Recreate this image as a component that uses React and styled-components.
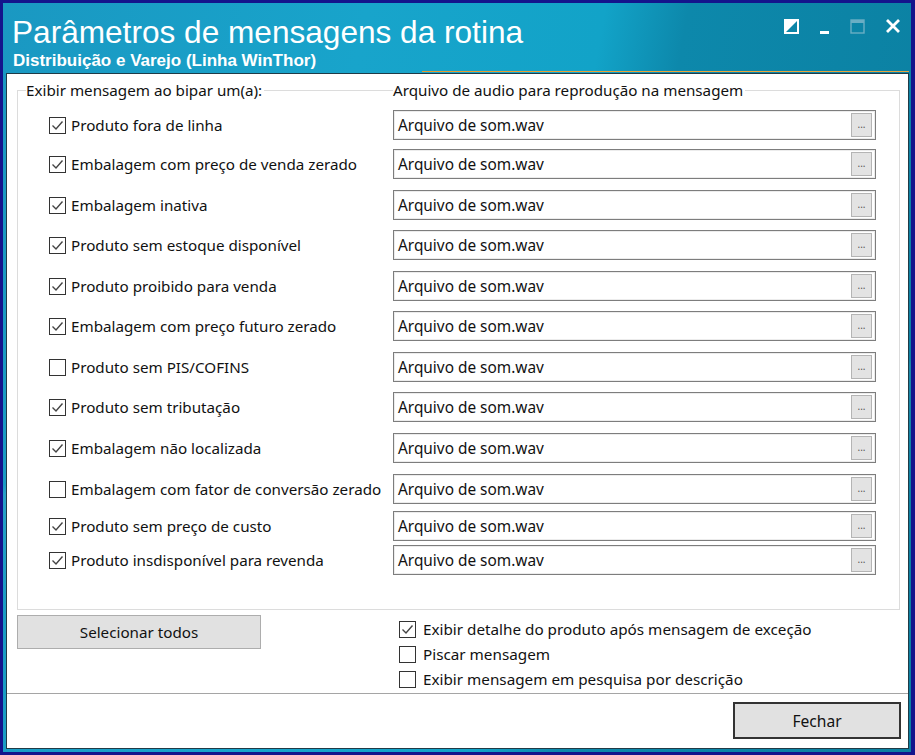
import styled, { createGlobalStyle } from 'styled-components';

const GlobalStyle = createGlobalStyle`
  html, body {
    margin: 0;
    padding: 0;
  }
  body {
    width: 915px;
    height: 755px;
    overflow: hidden;
    font-family: "Noto Sans", "Open Sans", sans-serif;
    color: #111;
  }
`;

const rows = [
  { label: 'Produto fora de linha', checked: true, gap: 10 },
  { label: 'Embalagem com preço de venda zerado', checked: true, gap: 9 },
  { label: 'Embalagem inativa', checked: true, gap: 11 },
  { label: 'Produto sem estoque disponível', checked: true, gap: 10 },
  { label: 'Produto proibido para venda', checked: true, gap: 11 },
  { label: 'Embalagem com preço futuro zerado', checked: true, gap: 10 },
  { label: 'Produto sem PIS/COFINS', checked: false, gap: 11 },
  { label: 'Produto sem tributação', checked: true, gap: 10 },
  { label: 'Embalagem não localizada', checked: true, gap: 11 },
  { label: 'Embalagem com fator de conversão zerado', checked: false, gap: 11 },
  { label: 'Produto sem preço de custo', checked: true, gap: 7 },
  { label: 'Produto insdisponível para revenda', checked: true, gap: 4 },
];

const options = [
  { label: 'Exibir detalhe do produto após mensagem de exceção', checked: true },
  { label: 'Piscar mensagem', checked: false },
  { label: 'Exibir mensagem em pesquisa por descrição', checked: false },
];

const CheckBox = ({ checked }) => (
  <Box>
    {checked && (
      <svg width="15" height="15" viewBox="0 0 15 15">
        <path d="M2.5 7.5 L6 11 L12.5 3.5" fill="none" stroke="#444" strokeWidth="1.4" />
      </svg>
    )}
  </Box>
);

const App = () => {
  return (
    <Frame>
      <GlobalStyle />
      <Window>
        <Header>
          <TitleRow>
            <Title>Parâmetros de mensagens da rotina</Title>
            <Controls>
              <svg width="15" height="15" viewBox="0 0 15 15">
                <rect x="1" y="1" width="13" height="13" fill="none" stroke="#fff" strokeWidth="2" />
                <polygon points="1,1 14,1 1,14" fill="#fff" />
              </svg>
              <svg width="11" height="15" viewBox="0 0 11 15">
                <rect x="1" y="12" width="9" height="3" fill="#fff" />
              </svg>
              <svg width="15" height="15" viewBox="0 0 15 15">
                <rect x="1" y="1" width="13" height="13" fill="none" stroke="#6aaec4" strokeWidth="1.4" />
                <rect x="1" y="1" width="13" height="3" fill="#6aaec4" />
              </svg>
              <svg width="16" height="16" viewBox="0 0 16 16">
                <path d="M2 2 L14 14 M14 2 L2 14" stroke="#fff" strokeWidth="2.8" />
              </svg>
            </Controls>
          </TitleRow>
          <Subtitle>Distribuição e Varejo (Linha WinThor)</Subtitle>
          <AccentLine />
        </Header>

        <Panel>
          <GroupBox>
            <GroupHeader>
              <Legend>Exibir mensagem ao bipar um(a):</Legend>
              <Legend>Arquivo de audio para reprodução na mensagem</Legend>
            </GroupHeader>
            {rows.map((row) => (
              <Row key={row.label} $gap={row.gap}>
                <CheckLabel>
                  <CheckBox checked={row.checked} />
                  <span>{row.label}</span>
                </CheckLabel>
                <Field>
                  <FieldText>Arquivo de som.wav</FieldText>
                  <BrowseButton>...</BrowseButton>
                </Field>
              </Row>
            ))}
          </GroupBox>

          <BottomArea>
            <SelectButton>Selecionar todos</SelectButton>
            <Options>
              {options.map((opt) => (
                <OptionRow key={opt.label}>
                  <CheckBox checked={opt.checked} />
                  <span>{opt.label}</span>
                </OptionRow>
              ))}
            </Options>
          </BottomArea>

          <Footer>
            <CloseButton>Fechar</CloseButton>
          </Footer>
        </Panel>
      </Window>
    </Frame>
  );
};

const Frame = styled.div`
  width: 915px;
  height: 755px;
  box-sizing: border-box;
  background: #14148c;
  padding: 3px 4px 3px 3px;
  display: flex;
`;

const Window = styled.div`
  flex: 1;
  display: flex;
  flex-direction: column;
  padding: 0 2px 3px 3px;
  background:
    linear-gradient(172deg, rgba(255, 255, 255, 0) 55%, rgba(255, 255, 255, 0.06) 56%, rgba(255, 255, 255, 0) 70%),
    linear-gradient(100deg, #1a98c2 0%, #18a4cb 35%, #12a3c8 58%, #0d88ab 66%, #0b7fa0 100%);
`;

const Header = styled.div`
  height: 70px;
  display: flex;
  flex-direction: column;
`;

const TitleRow = styled.div`
  display: flex;
  align-items: flex-start;
  justify-content: space-between;
  height: 47px;
  padding: 0 8px 0 6px;
`;

const Title = styled.div`
  font-family: "Liberation Sans", Arial, sans-serif;
  font-size: 31.6px;
  line-height: 36px;
  margin-top: 11px;
  color: #fff;
  white-space: nowrap;
`;

const Controls = styled.div`
  display: flex;
  align-items: center;
  gap: 20px;
  margin-top: 15px;
  svg {
    display: block;
  }
`;

const Subtitle = styled.div`
  font-family: "Liberation Sans", Arial, sans-serif;
  font-weight: bold;
  font-size: 17px;
  line-height: 20px;
  color: #fff;
  padding: 1px 0 0 7px;
`;

const AccentLine = styled.div`
  margin-top: auto;
  margin-left: 416px;
  margin-bottom: 1px;
  height: 3px;
  background: linear-gradient(90deg, #e99a2c, #f0a83a 60%, #e7a53f);
`;

const Panel = styled.div`
  flex: 1;
  background: #fff;
  border: 1px solid #1f3b47;
  display: flex;
  flex-direction: column;
`;

const GroupBox = styled.div`
  margin: 16px 8px 0 10px;
  border: 1px solid #dcdcdc;
  padding: 0 23px 34px 31px;
`;

const GroupHeader = styled.div`
  display: grid;
  grid-template-columns: 367px 1fr;
  margin: -10px 0 0 -23px;
  height: 19px;
`;

const Legend = styled.span`
  justify-self: start;
  background: #fff;
  padding-right: 2px;
  font-size: 15.2px;
  line-height: 19px;
  color: #111;
`;

const Row = styled.div`
  display: grid;
  grid-template-columns: 344px 1fr;
  align-items: center;
  height: 30px;
  margin-top: ${(p) => p.$gap}px;
`;

const CheckLabel = styled.label`
  display: flex;
  align-items: center;
  gap: 5px;
  font-size: 15.2px;
  color: #111;
  white-space: nowrap;
`;

const Box = styled.span`
  width: 17px;
  height: 17px;
  box-sizing: border-box;
  border: 1px solid #333;
  background: #fff;
  display: flex;
  align-items: center;
  justify-content: center;
  flex: none;
`;

const Field = styled.div`
  height: 30px;
  box-sizing: border-box;
  border: 1px solid #7d7d7d;
  box-shadow: inset 0 0 0 1px #ececec;
  display: flex;
  align-items: center;
  padding: 0 3px 0 4px;
`;

const FieldText = styled.span`
  flex: 1;
  font-size: 15.4px;
  color: #111;
`;

const BrowseButton = styled.span`
  width: 21px;
  height: 24px;
  box-sizing: border-box;
  border: 1px solid #b4b4b4;
  background: #e3e3e3;
  font-size: 10px;
  line-height: 10px;
  color: #555;
  display: flex;
  align-items: center;
  justify-content: center;
  padding-bottom: 2px;
`;

const BottomArea = styled.div`
  flex: 1;
  display: flex;
  align-items: flex-start;
  padding: 5px 0 0 10px;
  border-bottom: 1px solid #a5a5a5;
`;

const SelectButton = styled.button`
  width: 244px;
  height: 34px;
  box-sizing: border-box;
  border: 1px solid #adadad;
  background: #e1e1e1;
  font-family: "Noto Sans", "Open Sans", sans-serif;
  font-size: 15.2px;
  color: #111;
  padding: 0;
`;

const Options = styled.div`
  display: flex;
  flex-direction: column;
  margin-left: 138px;
  padding-top: 1.5px;
`;

const OptionRow = styled.label`
  display: flex;
  align-items: center;
  gap: 7px;
  height: 25px;
  font-size: 15.25px;
  color: #111;
  white-space: nowrap;
`;

const Footer = styled.div`
  height: 54px;
  display: flex;
  justify-content: flex-end;
  align-items: flex-start;
  padding: 8px 7px 0 0;
  box-sizing: border-box;
`;

const CloseButton = styled.button`
  width: 168px;
  height: 37px;
  box-sizing: border-box;
  border: 2px solid #333;
  background: #e1e1e1;
  font-family: "Noto Sans", "Open Sans", sans-serif;
  font-size: 15.6px;
  color: #111;
  padding: 0;
`;

export default App;
